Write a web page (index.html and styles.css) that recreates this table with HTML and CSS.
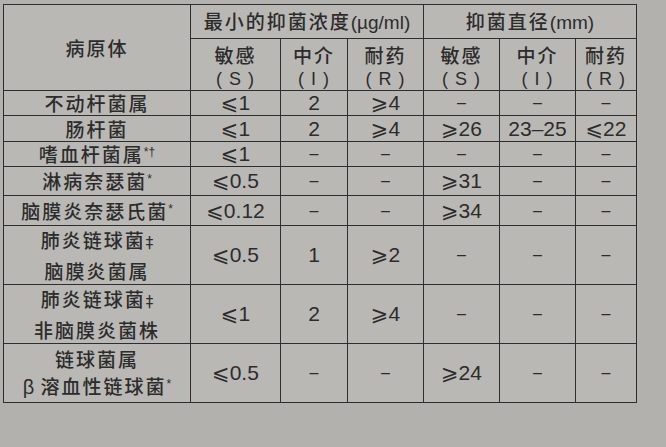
FILE: index.html
```html
<!DOCTYPE html>
<html lang="zh-CN">
<head>
<meta charset="utf-8">
<title>抑菌浓度与直径</title>
<link rel="stylesheet" href="styles.css">
</head>
<body>
<div class="page">
<table class="grid">
  <colgroup>
    <col class="c-name"><col class="c-s"><col class="c-i"><col class="c-r">
    <col class="c-ds"><col class="c-di"><col class="c-dr">
  </colgroup>
  <thead>
    <tr class="h1">
      <th rowspan="2" class="name-head">病原体</th>
      <th colspan="3">最小的抑菌浓度<span class="lat">(µg/ml)</span></th>
      <th colspan="3">抑菌直径<span class="lat">(mm)</span></th>
    </tr>
    <tr class="h2">
      <th><span class="cn">敏感</span><span class="par">( S )</span></th>
      <th><span class="cn">中介</span><span class="par">( I )</span></th>
      <th><span class="cn">耐药</span><span class="par">( R )</span></th>
      <th><span class="cn">敏感</span><span class="par">( S )</span></th>
      <th><span class="cn">中介</span><span class="par">( I )</span></th>
      <th><span class="cn">耐药</span><span class="par">( R )</span></th>
    </tr>
  </thead>
  <tbody>
    <tr class="r25">
      <td class="name">不动杆菌属</td>
      <td class="num">⩽1</td><td class="num">2</td><td class="num">⩾4</td>
      <td class="dash">–</td><td class="dash">–</td><td class="dash">–</td>
    </tr>
    <tr class="r26">
      <td class="name">肠杆菌</td>
      <td class="num">⩽1</td><td class="num">2</td><td class="num">⩾4</td>
      <td class="num">⩾26</td><td class="num">23–25</td><td class="num">⩽22</td>
    </tr>
    <tr class="r25">
      <td class="name">嗜血杆菌属<sup>*†</sup></td>
      <td class="num">⩽1</td><td class="dash">–</td><td class="dash">–</td>
      <td class="dash">–</td><td class="dash">–</td><td class="dash">–</td>
    </tr>
    <tr class="r29">
      <td class="name">淋病奈瑟菌<sup>*</sup></td>
      <td class="num">⩽0.5</td><td class="dash">–</td><td class="dash">–</td>
      <td class="num">⩾31</td><td class="dash">–</td><td class="dash">–</td>
    </tr>
    <tr class="r30">
      <td class="name">脑膜炎奈瑟氏菌<sup>*</sup></td>
      <td class="num">⩽0.12</td><td class="dash">–</td><td class="dash">–</td>
      <td class="num">⩾34</td><td class="dash">–</td><td class="dash">–</td>
    </tr>
    <tr class="r58">
      <td class="name two">肺炎链球菌<span class="dd">‡</span><br>脑膜炎菌属</td>
      <td class="num">⩽0.5</td><td class="num">1</td><td class="num">⩾2</td>
      <td class="dash">–</td><td class="dash">–</td><td class="dash">–</td>
    </tr>
    <tr class="r58">
      <td class="name two">肺炎链球菌<span class="dd">‡</span><br>非脑膜炎菌株</td>
      <td class="num">⩽1</td><td class="num">2</td><td class="num">⩾4</td>
      <td class="dash">–</td><td class="dash">–</td><td class="dash">–</td>
    </tr>
    <tr class="r58">
      <td class="name two">链球菌属<br><span class="beta">β</span> 溶血性链球菌<sup>*</sup></td>
      <td class="num">⩽0.5</td><td class="dash">–</td><td class="dash">–</td>
      <td class="num">⩾24</td><td class="dash">–</td><td class="dash">–</td>
    </tr>
  </tbody>
</table>
</div>
</body>
</html>
```

FILE: styles.css
```css
html, body {
  margin: 0;
  padding: 0;
}
body {
  width: 666px;
  height: 447px;
  overflow: hidden;
  background: #b3b1ae;
  color: #2c2c2c;
  font-family: "Noto Sans CJK SC", "Noto Sans", sans-serif;
}
.page {
  padding: 4px 0 0 3px;
  border-top: 3px solid #c4c2bf;
  margin-top: -3px;
}
.grid {
  border-collapse: collapse;
  table-layout: fixed;
  width: 634px;
  background: #bab8b5;
}
.c-name { width: 187px; }
.c-s { width: 90px; }
.c-i { width: 67px; }
.c-r { width: 76px; }
.c-ds { width: 76px; }
.c-di { width: 76px; }
.c-dr { width: 61px; }

.grid th,
.grid td {
  border: 1px solid #2e2e2e;
  padding: 0;
  text-align: center;
  vertical-align: middle;
  font-weight: 500;
  font-size: 19px;
  line-height: 22px;
  letter-spacing: 2px;
}
.h1 { height: 34px; }
.h1 th { letter-spacing: 2px; font-size: 19px; }
.h2 { height: 52px; }
.h2 th { padding-top: 1px; }
.cn {
  display: block;
  height: 27px;
  line-height: 27px;
}
.par {
  display: block;
  height: 22px;
  line-height: 22px;
  font-family: "Liberation Sans", sans-serif;
  font-weight: normal;
  font-size: 18px;
  letter-spacing: 1px;
  white-space: pre;
}
.lat {
  font-family: "Liberation Sans", sans-serif;
  font-size: 19px;
  letter-spacing: 0;
  font-weight: normal;
}
.r25 { height: 25px; }
.r26 { height: 26px; }
.r29 { height: 29px; }
.r30 { height: 30px; }
.r58 { height: 59px; }

.grid td.two {
  line-height: 27px;
}
.grid td.num {
  font-family: "Liberation Sans", "DejaVu Sans", sans-serif;
  font-size: 21px;
  letter-spacing: 0;
  font-weight: normal;
}
.grid td.dash {
  font-family: "Liberation Sans", sans-serif;
  font-size: 16px;
  letter-spacing: 0;
  font-weight: normal;
}
.name sup {
  font-family: "Liberation Sans", sans-serif;
  font-size: 12px;
  letter-spacing: 0;
  vertical-align: 6px;
  line-height: 0;
}
.dd {
  font-family: "DejaVu Sans", sans-serif;
  font-size: 15px;
  letter-spacing: 0;
  font-weight: normal;
}
.beta {
  font-family: "Liberation Sans", sans-serif;
  font-size: 20px;
  letter-spacing: 0;
  font-weight: normal;
}
```
